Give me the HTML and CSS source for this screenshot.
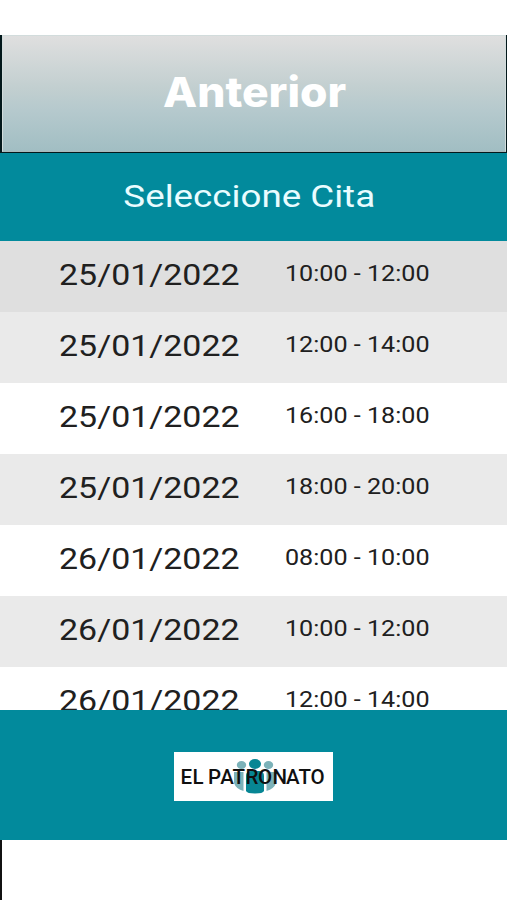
FILE: index.html
```html
<!DOCTYPE html>
<html lang="es">
<head>
<meta charset="utf-8">
<title>Seleccione Cita</title>
<link rel="stylesheet" href="styles.css">
</head>
<body>
<div class="screen">
  <div class="top"><button class="back"><span class="back-label">Anterior</span></button></div>
  <h1 class="heading"><span class="heading-label">Seleccione Cita</span></h1>
  <ul class="list">
    <li class="row selected"><span class="date">25/01/2022</span><span class="time">10:00 - 12:00</span></li>
    <li class="row shaded"><span class="date">25/01/2022</span><span class="time">12:00 - 14:00</span></li>
    <li class="row"><span class="date">25/01/2022</span><span class="time">16:00 - 18:00</span></li>
    <li class="row shaded"><span class="date">25/01/2022</span><span class="time">18:00 - 20:00</span></li>
    <li class="row"><span class="date">26/01/2022</span><span class="time">08:00 - 10:00</span></li>
    <li class="row shaded"><span class="date">26/01/2022</span><span class="time">10:00 - 12:00</span></li>
    <li class="row"><span class="date">26/01/2022</span><span class="time">12:00 - 14:00</span></li>
  </ul>
  <footer class="footer">
    <svg class="logo" width="159" height="49" viewBox="0 0 159 49">
      <rect width="159" height="49" fill="#fff"/>
      <g fill="#7cb2b9">
        <ellipse cx="67.500" cy="13" rx="4.700" ry="4"/>
        <ellipse cx="94.500" cy="13" rx="4.700" ry="4"/>
        <path d="M60 20H69.500V39Q62 37 60 31ZM102 20H92.500V39Q100 37 102 31Z"/>
      </g>
      <g fill="#078694">
        <ellipse cx="81" cy="12" rx="6" ry="5"/>
        <path d="M72 24Q72 19 77 19H85Q90 19 90 24V39Q89 41.500 81 41.500Q73 41.500 72 39Z"/>
      </g>
      <text class="logo-text" y="31.500" x="6.500 18.500 34 46.300 58.500 71.500 84 98.500 112 124.500 136.500">ELPATRONATO</text>
    </svg>
  </footer>
  <div class="bottom"></div>
</div>
</body>
</html>
```
FILE: styles.css
```css
* { box-sizing: border-box; }
body { margin: 0; background: #fff; font-family: Roboto, sans-serif; }
.screen { width: 507px; height: 900px; padding-top: 35px; display: flex; flex-direction: column; overflow: hidden; }
.top { height: 118px; flex: none; padding: 0 1px 1px 2px; background: #03181b; }
.back {
  display: flex; width: 100%; height: 117px; padding: 0 0 4px; border: 1px solid #d2dcdc; border-bottom-color: #a9b9ba;
  align-items: center; justify-content: center;
  background: linear-gradient(#dfdfdf, #c2cfd0 45%, #b5c9cd 65%, #a1bec3);
  color: #fff; font: 800 41.500px/60px Inter, sans-serif;
}
.back-label { display: block; transform: translateX(1px) scaleX(1.07); }
.heading { flex: none; height: 88px; margin: 0; display: flex; align-items: center; justify-content: center; background: #028a9c; color: #e9fcff; font-size: 31px; line-height: 40px; font-weight: 400; }
.heading-label { transform: scaleX(1.185); margin-right: 8px; }
.list { flex: none; height: 469px; margin: 0; padding: 0; overflow: hidden; list-style: none; }
.row { display: flex; height: 71px; padding: 14px 0 0 59px; color: #202020; }
.row.selected { background: #dfdfdf; }
.row.shaded { background: #eaeaea; }
.date { flex: none; width: 226px; font-size: 29px; line-height: 40px; transform: scaleX(1.17); transform-origin: left; }
.time { flex: none; font-size: 22px; line-height: 38px; transform: scaleX(1.142); transform-origin: left; }
.footer { flex: none; height: 130px; display: flex; justify-content: center; align-items: center; padding-top: 2px; background: #028a9c; }
.logo { display: block; }
.logo-text { font: 500 20.500px Roboto, sans-serif; fill: #101010; }
.bottom { flex: 1; border-left: 2px solid #111; }
```
